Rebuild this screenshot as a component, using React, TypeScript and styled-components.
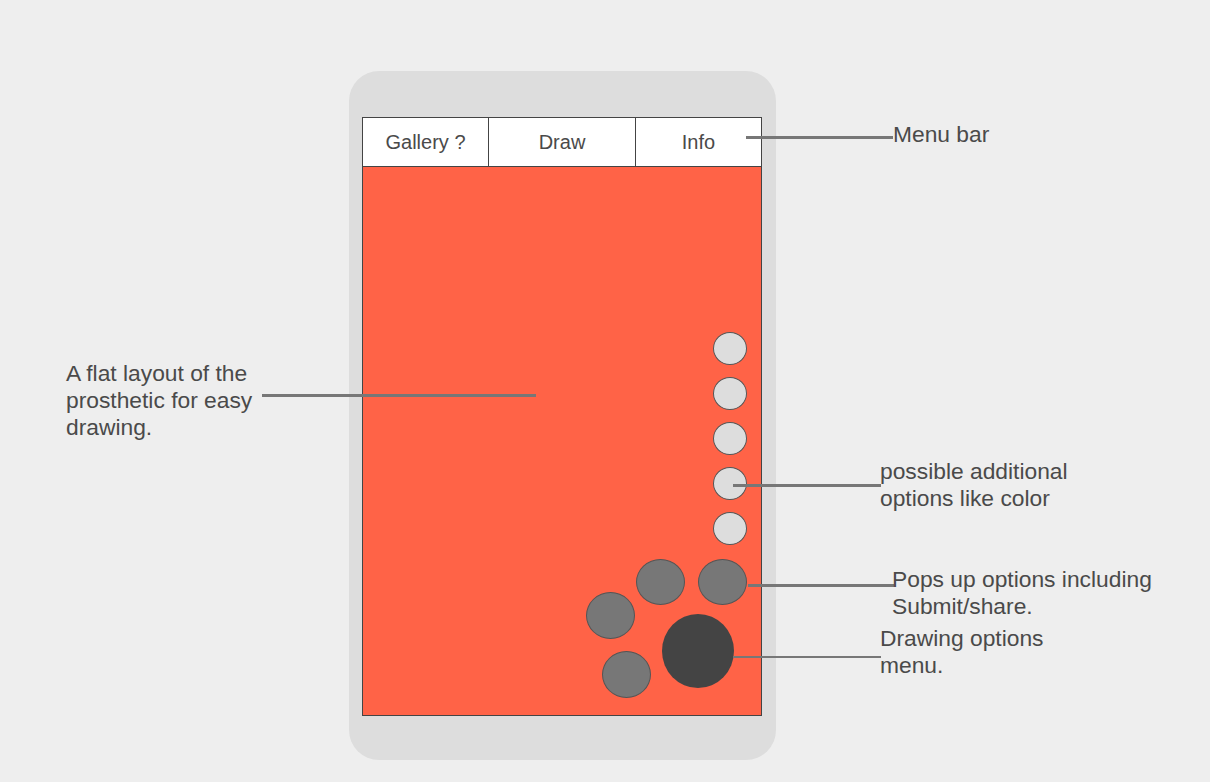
import React from 'react';
import styled, { createGlobalStyle } from 'styled-components';

const INK = '#4a4a4a';
const LINE = '#777777';
const CANVAS = '#ff6347';

type Dot = { left: number; top: number; w: number; h: number };
type Leader = { left: number; top: number; width: number; thick?: number };
type Note = { left: number; top: number; lines: string[] };

const OPTION_COUNT = 5;

const popups: Dot[] = [
  { left: 273, top: 392, w: 49, h: 46 },
  { left: 335, top: 392, w: 49, h: 46 },
  { left: 223, top: 425, w: 49, h: 47 },
  { left: 239, top: 484, w: 49, h: 47 },
];

const leaders: Leader[] = [
  { left: 746, top: 136, width: 147 },
  { left: 262, top: 394, width: 274 },
  { left: 733, top: 484, width: 148 },
  { left: 748, top: 584, width: 146 },
  { left: 733, top: 656, width: 148, thick: 2 },
];

const notes: Note[] = [
  { left: 893, top: 121, lines: ['Menu bar'] },
  { left: 66, top: 360, lines: ['A flat layout of the', 'prosthetic for easy', 'drawing.'] },
  { left: 880, top: 458, lines: ['possible additional', 'options like color'] },
  { left: 892, top: 566, lines: ['Pops up options including', 'Submit/share.'] },
  { left: 880, top: 625, lines: ['Drawing options', 'menu.'] },
];

const tabs = [
  { label: 'Gallery ?', width: 126 },
  { label: 'Draw', width: 147 },
  { label: 'Info', width: 125 },
];

export default function App() {
  return (
    <>
      <GlobalStyle />
      <Page>
        <Phone>
          <Screen>
            <MenuBar>
              {tabs.map((t) => (
                <Tab key={t.label} width={t.width}>
                  {t.label}
                </Tab>
              ))}
            </MenuBar>
            <Canvas>
              <OptionColumn>
                {Array.from({ length: OPTION_COUNT }, (_, i) => (
                  <OptionDot key={i} />
                ))}
              </OptionColumn>
              {popups.map((d, i) => (
                <PopupDot key={i} style={{ left: d.left, top: d.top, width: d.w, height: d.h }} />
              ))}
              <MenuDot />
            </Canvas>
          </Screen>
        </Phone>

        {leaders.map((l, i) => (
          <Leader
            key={i}
            thick={l.thick ?? 3}
            style={{ left: l.left, top: l.top, width: l.width }}
          />
        ))}
        {notes.map((n) => (
          <Label key={n.lines[0]} style={{ left: n.left, top: n.top }}>
            {n.lines.map((line) => (
              <div key={line}>{line}</div>
            ))}
          </Label>
        ))}
      </Page>
    </>
  );
}

const GlobalStyle = createGlobalStyle`
  html, body {
    margin: 0;
    padding: 0;
    background: #eeeeee;
  }
  * {
    box-sizing: border-box;
  }
`;

const Page = styled.div`
  position: relative;
  width: 1210px;
  height: 782px;
  overflow: hidden;
  background: #eeeeee;
  font-family: 'Liberation Sans', Arial, sans-serif;
  color: ${INK};
  padding: 71px 0 0 349px;
`;

const Phone = styled.div`
  width: 427px;
  height: 689px;
  padding: 46px 14px 0 13px;
  background: #dddddd;
  border-radius: 30px;
`;

const Screen = styled.div`
  width: 400px;
  height: 599px;
  display: flex;
  flex-direction: column;
  border: 1px solid #444444;
  background: ${CANVAS};
`;

const MenuBar = styled.div`
  display: flex;
  height: 49px;
  flex-shrink: 0;
  background: #ffffff;
  border-bottom: 1px solid #444444;
`;

const Tab = styled.div<{ width: number }>`
  width: ${({ width }) => width}px;
  display: flex;
  align-items: center;
  justify-content: center;
  font-size: 20px;
  color: ${INK};
  border-right: 1px solid #444444;

  &:last-child {
    border-right: none;
  }
`;

const Canvas = styled.div`
  position: relative;
  flex: 1;
  display: flex;
  justify-content: flex-end;
  padding: 165px 14px 0 0;
  background: ${CANVAS};
`;

const OptionColumn = styled.div`
  display: flex;
  flex-direction: column;
  gap: 12px;
`;

const OptionDot = styled.div`
  width: 34px;
  height: 33px;
  border-radius: 50%;
  border: 1px solid #555555;
  background: #dddddd;
`;

const PopupDot = styled.div`
  position: absolute;
  border-radius: 50%;
  border: 1px solid #555555;
  background: #777777;
`;

const MenuDot = styled.div`
  position: absolute;
  left: 299px;
  top: 447px;
  width: 72px;
  height: 74px;
  border-radius: 50%;
  background: #444444;
`;

const Leader = styled.div<{ thick: number }>`
  position: absolute;
  height: ${({ thick }) => thick}px;
  background: ${LINE};
`;

const Label = styled.div`
  position: absolute;
  font-size: 22.8px;
  line-height: 27px;
  color: ${INK};
  white-space: nowrap;
`;

Page.displayName = 'Page';
Phone.displayName = 'Phone';
Screen.displayName = 'Screen';
MenuBar.displayName = 'MenuBar';
Tab.displayName = 'Tab';
Canvas.displayName = 'Canvas';
OptionColumn.displayName = 'OptionColumn';
OptionDot.displayName = 'OptionDot';
PopupDot.displayName = 'PopupDot';
MenuDot.displayName = 'MenuDot';
Leader.displayName = 'Leader';
Label.displayName = 'Label';
